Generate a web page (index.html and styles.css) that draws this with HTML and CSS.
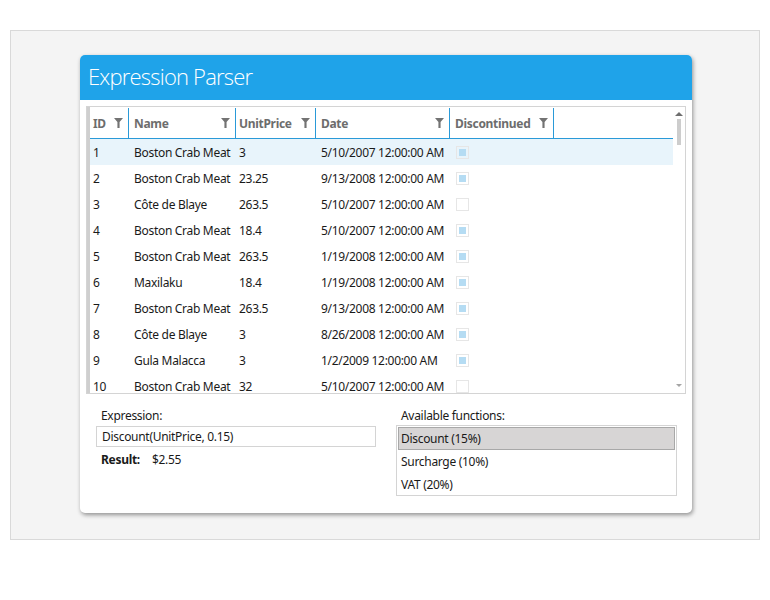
FILE: index.html
```html
<!DOCTYPE html>
<html>
<head>
    <link rel="stylesheet" href="styles.css">
</head>
<body>
    <div class="frame">
        <div class="card">
            <div class="card-header">Expression Parser</div>

            <div class="grid">
                <div class="grid-strip"></div>
                <div class="grid-table">
                    <div class="grid-head">
                        <div class="head-cell"><span>ID</span><i class="funnel"></i></div>
                        <div class="head-cell"><span>Name</span><i class="funnel"></i></div>
                        <div class="head-cell"><span>UnitPrice</span><i class="funnel"></i></div>
                        <div class="head-cell"><span>Date</span><i class="funnel"></i></div>
                        <div class="head-cell"><span>Discontinued</span><i class="funnel"></i></div>
                        <div class="head-fill"></div>
                    </div>
                    <div class="grid-body">
                        <div class="row current"><span>1</span><span>Boston Crab Meat</span><span>3</span><span>5/10/2007 12:00:00 AM</span><span><b class="check on"></b></span></div>
                        <div class="row"><span>2</span><span>Boston Crab Meat</span><span>23.25</span><span>9/13/2008 12:00:00 AM</span><span><b class="check on"></b></span></div>
                        <div class="row"><span>3</span><span>Côte de Blaye</span><span>263.5</span><span>5/10/2007 12:00:00 AM</span><span><b class="check"></b></span></div>
                        <div class="row"><span>4</span><span>Boston Crab Meat</span><span>18.4</span><span>5/10/2007 12:00:00 AM</span><span><b class="check on"></b></span></div>
                        <div class="row"><span>5</span><span>Boston Crab Meat</span><span>263.5</span><span>1/19/2008 12:00:00 AM</span><span><b class="check on"></b></span></div>
                        <div class="row"><span>6</span><span>Maxilaku</span><span>18.4</span><span>1/19/2008 12:00:00 AM</span><span><b class="check on"></b></span></div>
                        <div class="row"><span>7</span><span>Boston Crab Meat</span><span>263.5</span><span>9/13/2008 12:00:00 AM</span><span><b class="check on"></b></span></div>
                        <div class="row"><span>8</span><span>Côte de Blaye</span><span>3</span><span>8/26/2008 12:00:00 AM</span><span><b class="check on"></b></span></div>
                        <div class="row"><span>9</span><span>Gula Malacca</span><span>3</span><span>1/2/2009 12:00:00 AM</span><span><b class="check on"></b></span></div>
                        <div class="row"><span>10</span><span>Boston Crab Meat</span><span>32</span><span>5/10/2007 12:00:00 AM</span><span><b class="check"></b></span></div>
                    </div>
                </div>
                <div class="scrollbar">
                    <i class="arrow up"></i>
                    <div class="thumb"></div>
                    <i class="arrow down"></i>
                </div>
            </div>

            <div class="bottom">
                <div class="panel">
                    <div class="label">Expression:</div>
                    <div class="textbox">Discount(UnitPrice, 0.15)</div>
                    <div class="result"><b>Result:</b><span>$2.55</span></div>
                </div>
                <div class="panel">
                    <div class="label">Available functions:</div>
                    <div class="listbox">
                        <div class="list-item selected">Discount (15%)</div>
                        <div class="list-item">Surcharge (10%)</div>
                        <div class="list-item">VAT (20%)</div>
                    </div>
                </div>
            </div>
        </div>
    </div>
</body>
</html>
```

FILE: styles.css
```css
body {
    margin: 0;
    padding: 30px 10px 0;
    background-color: #ffffff;
    font-family: 'Noto Sans', 'Open Sans', sans-serif;
    font-size: 12px;
    letter-spacing: -0.3px;
    color: #1a1a1a;
}

.frame {
    width: 750px;
    height: 510px;
    box-sizing: border-box;
    background-color: #f4f4f4;
    border: 1px solid #d9d9d9;
    padding: 24px 0 0 69px;
}

.card {
    width: 612px;
    height: 458px;
    background-color: #ffffff;
    border-radius: 5px;
    box-shadow: 1px 2px 4px rgba(0, 0, 0, 0.4);
    overflow: hidden;
}

.card-header {
    height: 45px;
    background-color: #1fa3e9;
    color: #ffffff;
    font-family: 'Open Sans', sans-serif;
    font-weight: 300;
    font-size: 22px;
    letter-spacing: -0.8px;
    line-height: 42px;
    padding-left: 8px;
}

/* grid */
.grid {
    margin: 6px 6px 0;
    height: 286px;
    border: 1px solid #d4d4d4;
    display: flex;
    overflow: hidden;
}

.grid-strip {
    width: 3px;
    background-color: #cfcfcf;
}

.grid-table {
    flex: 1;
    overflow: hidden;
}

.grid-head {
    display: flex;
    height: 31px;
    border-bottom: 1px solid #2a9ad8;
}

.head-cell {
    display: flex;
    align-items: center;
    justify-content: space-between;
    padding: 0 5px 0 5px;
    border-right: 1px solid #2a9ad8;
    font-weight: bold;
    color: #6d6d6d;
    box-sizing: border-box;
    margin-top: 1px;
}

.head-cell:nth-child(1) { width: 39px; padding-left: 3px; }
.head-cell:nth-child(2) { width: 107px; }
.head-cell:nth-child(3) { width: 80px; padding-left: 3px; }
.head-cell:nth-child(4) { width: 134px; }
.head-cell:nth-child(5) { width: 104px; }

.head-fill { flex: 1; }

.funnel {
    width: 9px;
    height: 10px;
    background-color: #737373;
    clip-path: polygon(0 0, 100% 0, 62% 40%, 62% 100%, 38% 100%, 38% 40%);
}

.grid-body .row {
    display: grid;
    grid-template-columns: 39px 107px 80px 134px 104px;
    height: 26px;
    align-items: center;
}

.row span {
    padding-left: 5px;
    white-space: nowrap;
}

.row span:first-child,
.row span:nth-child(3) { padding-left: 3px; }

.row.current { background-color: #e8f4fb; }

.check {
    display: block;
    width: 11px;
    height: 11px;
    border: 1px solid #e6e6e6;
    margin-left: 1px;
    position: relative;
}

.check.on::after {
    content: '';
    position: absolute;
    left: 2px;
    top: 2px;
    width: 7px;
    height: 7px;
    background-color: #b5dcf3;
}

.scrollbar {
    width: 12px;
    display: flex;
    flex-direction: column;
    align-items: center;
    padding-top: 5px;
}

.arrow {
    width: 0;
    height: 0;
    border-left: 4px solid transparent;
    border-right: 4px solid transparent;
}

.arrow.up { border-bottom: 4px solid #6e6e6e; }

.arrow.down {
    border-top: 3px solid #a5a5a5;
    border-left-width: 3px;
    border-right-width: 3px;
    margin-top: auto;
    margin-bottom: 6px;
}

.thumb {
    width: 4px;
    height: 26px;
    margin-top: 3px;
    background-color: #cdcdcd;
}

/* bottom panels */
.bottom {
    display: flex;
    gap: 20px;
    padding: 13px 0 0 16px;
}

.panel { width: 280px; }

.label {
    padding-left: 5px;
    height: 19px;
    line-height: 17px;
}

.textbox {
    height: 19px;
    width: 273px;
    border: 1px solid #d4d4d4;
    line-height: 19px;
    padding-left: 5px;
}

.result {
    padding: 4px 0 0 5px;
}

.result b { margin-right: 12px; }

.listbox {
    width: 277px;
    height: 67px;
    border: 1px solid #d4d4d4;
    padding: 1px;
    margin-top: -1px;
}

.list-item {
    height: 21px;
    line-height: 21px;
    padding-left: 2px;
    border: 1px solid transparent;
}

.list-item.selected {
    background-color: #d7d5d5;
    border-color: #a8a8a8;
}
```
